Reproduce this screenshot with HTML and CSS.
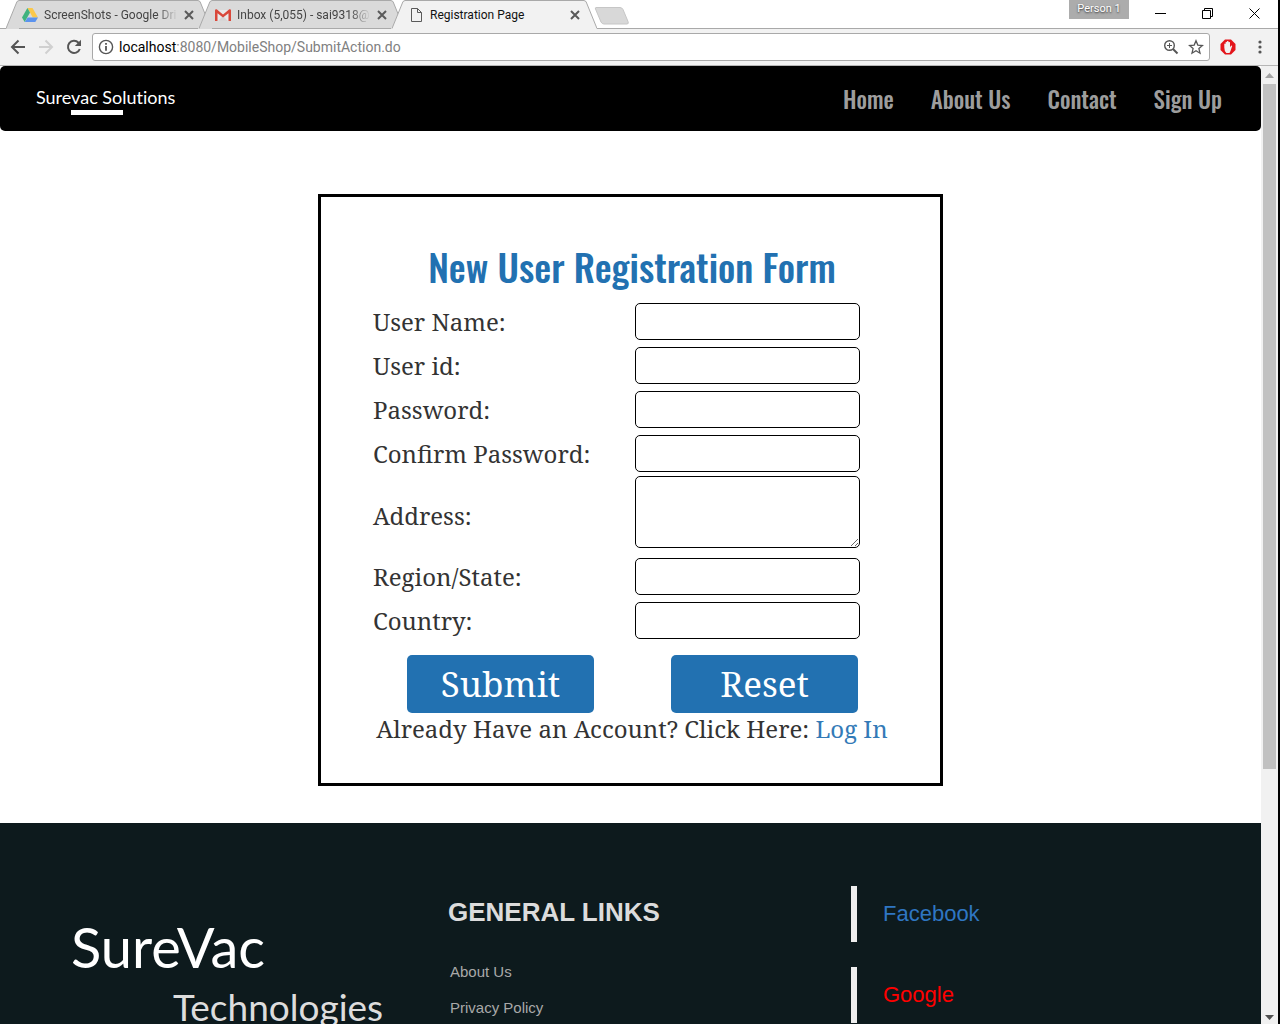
FILE: index.html
```html
<!DOCTYPE html>
<html lang="en">
<head>
<meta charset="utf-8">
<title>Registration Page</title>
<link rel="stylesheet" href="styles.css">
</head>
<body>
<div class="window">
  <header class="tabstrip">
    <div class="tab">
      <svg class="slope" width="13" height="29" viewBox="0 0 13 29"><path class="fill" d="M0 29 0 28.500 11 1.500 13 .5V29z"/><path class="line" d="M0 28.500 11 1.500 13 .5"/></svg>
      <div class="tab-body">
        <svg width="16" height="16" viewBox="0 0 16 16"><path fill="#fbc84b" d="M5.500 1h5L16 10.500h-5.200z"/><path fill="#3fb37f" d="M5.400 1 8 5.600 2.700 15 0 10.500z"/><path fill="#5b93ee" d="M5.600 10.500H16L13.300 15H2.800z"/></svg>
        <span class="tab-title fade">ScreenShots - Google Dri</span>
        <button class="close" aria-label="Close ScreenShots"><svg width="10" height="10" viewBox="0 0 10 10"><path d="M1 1l8 8M9 1L1 9"/></svg></button>
      </div>
      <svg class="slope" width="13" height="29" viewBox="0 0 13 29"><path class="fill" d="M13 29V28.500L2 1.500 0 .5V29z"/><path class="line" d="M13 28.500 2 1.500 0 .5"/></svg>
    </div>
    <div class="tab">
      <svg class="slope" width="13" height="29" viewBox="0 0 13 29"><path class="fill" d="M0 29 0 28.500 11 1.500 13 .5V29z"/><path class="line" d="M0 28.500 11 1.500 13 .5"/></svg>
      <div class="tab-body">
        <svg width="16" height="16" viewBox="0 0 16 16"><path fill="#e9e9e9" d="M1 3h14v11H1z"/><path fill="#d6d6d6" d="M3 14 8 9l5 5z"/><path fill="#d9483b" d="M0 3.500C0 2.500 1.300 2 2 2.600l6 4.800 6-4.800c.7-.6 2-.1 2 .9V14h-2.500V6.200L8 10.600 2.500 6.200V14H0z"/></svg>
        <span class="tab-title fade">Inbox (5,055) - sai9318@</span>
        <button class="close" aria-label="Close Inbox"><svg width="10" height="10" viewBox="0 0 10 10"><path d="M1 1l8 8M9 1L1 9"/></svg></button>
      </div>
      <svg class="slope" width="13" height="29" viewBox="0 0 13 29"><path class="fill" d="M13 29V28.500L2 1.500 0 .5V29z"/><path class="line" d="M13 28.500 2 1.500 0 .5"/></svg>
    </div>
    <div class="tab active">
      <svg class="slope" width="13" height="29" viewBox="0 0 13 29"><path class="fill" d="M0 29 0 28.500 11 1.500 13 .5V29z"/><path class="line" d="M0 28.500 11 1.500 13 .5"/></svg>
      <div class="tab-body">
        <svg width="16" height="16" viewBox="0 0 16 16"><path fill="none" stroke="#5a5a5a" d="M3.500 1.500h6l4 4v9h-10zM9.500 1.500v4h4"/></svg>
        <span class="tab-title">Registration Page</span>
        <button class="close" aria-label="Close Registration Page"><svg width="10" height="10" viewBox="0 0 10 10"><path d="M1 1l8 8M9 1L1 9"/></svg></button>
      </div>
      <svg class="slope" width="13" height="29" viewBox="0 0 13 29"><path class="fill" d="M13 29V28.500L2 1.500 0 .5V29z"/><path class="line" d="M13 28.500 2 1.500 0 .5"/></svg>
    </div>
    <button class="newtab" aria-label="New tab"><svg width="36" height="20" viewBox="0 0 36 20"><path fill="#d8d8d8" stroke="#c6c6c6" d="M2 1.500h24q2 0 3 2l5 12q1 2.500-1 2.500H10q-2 0-3-2L1.500 3Q1 1.500 2 1.500z"/></svg></button>
    <div class="window-controls">
      <span class="person">Person 1</span>
      <button aria-label="Minimize"><svg width="11" height="11" viewBox="0 0 11 11"><path d="M0 5.500h11"/></svg></button>
      <button aria-label="Restore"><svg width="11" height="11" viewBox="0 0 11 11"><path d="M.5 2.500h8v8h-8zM2.500 2.500v-2h8v8h-2"/></svg></button>
      <button aria-label="Close"><svg width="11" height="11" viewBox="0 0 11 11"><path d="M.5.5l10 10M10.500.5l-10 10"/></svg></button>
    </div>
  </header>

  <div class="toolbar">
    <button aria-label="Back"><svg width="16" height="16" viewBox="0 0 16 16" fill="none" stroke="#555" stroke-width="2"><path d="M15 8H2.500M8.500 1.500 2 8l6.500 6.500"/></svg></button>
    <button aria-label="Forward"><svg width="16" height="16" viewBox="0 0 16 16" fill="none" stroke="#d0d0d0" stroke-width="2"><path d="M1 8h12.500M7.500 1.500 14 8l-6.500 6.500"/></svg></button>
    <button aria-label="Reload"><svg width="16" height="16" viewBox="0 0 16 16" fill="none" stroke="#555" stroke-width="2"><path d="M13.800 10A6.100 6.100 0 1 1 12.500 3.700L14 5.200"/><path fill="#555" stroke="none" d="M15 .8v6.200H8.800z"/></svg></button>
    <div class="omnibox">
      <svg width="16" height="16" viewBox="0 0 16 16" fill="none" stroke="#555" stroke-width="1.400"><circle cx="8" cy="8" r="6.600"/><path stroke-width="1.800" d="M8 7v4.800M8 4v1.800"/></svg>
      <span class="url"><b>localhost</b>:8080/MobileShop/SubmitAction.do</span>
      <svg width="16" height="16" viewBox="0 0 16 16" fill="none" stroke="#555"><circle cx="6.500" cy="6.500" r="4.800" stroke-width="1.400"/><path stroke-width="2" d="M10 10l4.500 4.500"/><path d="M4 6.500h5M6.500 4v5"/></svg>
      <svg width="16" height="16" viewBox="0 0 16 16" fill="none" stroke="#555" stroke-width="1.300"><path d="M8 1.800l1.800 4.300 4.700.4-3.600 3.100 1.100 4.600L8 11.700l-4 2.500 1.100-4.600L1.500 6.500l4.700-.4z"/></svg>
    </div>
    <button aria-label="Ad blocker"><svg width="16" height="16" viewBox="0 0 16 16"><path fill="#e3151b" d="M5 .5h6L15.500 5v6L11 15.500H5L.5 11V5z"/><path fill="#f1f1f1" d="M4.300 8.500V5q.6-.8 1.300 0V3.200q.7-.9 1.400 0V2.300q.8-.8 1.500 0v1q.8-.8 1.500 0v5l1-1.600q1-.6 1.200.3L10.500 12 9.500 14H6.300Q4.300 12 4.300 8.500z"/></svg></button>
    <button aria-label="Menu"><svg width="16" height="16" viewBox="0 0 16 16" fill="#555"><circle cx="8" cy="3" r="1.600"/><circle cx="8" cy="8" r="1.600"/><circle cx="8" cy="13" r="1.600"/></svg></button>
  </div>

  <div class="viewport">
    <div class="page">
      <nav class="navbar">
        <a class="brand" href="#">Surevac Solutions</a>
        <ul class="menu">
          <li><a href="#">Home</a></li>
          <li><a href="#">About Us</a></li>
          <li><a href="#">Contact</a></li>
          <li><a href="#">Sign Up</a></li>
        </ul>
      </nav>

      <main>
        <form class="card">
          <h1>New User Registration Form</h1>
          <div class="row"><label for="name">User Name:</label><input id="name" type="text"></div>
          <div class="row"><label for="uid">User id:</label><input id="uid" type="text"></div>
          <div class="row"><label for="pw">Password:</label><input id="pw" type="password"></div>
          <div class="row"><label for="pw2">Confirm Password:</label><input id="pw2" type="password"></div>
          <div class="row tall"><label for="addr">Address:</label><textarea id="addr"></textarea></div>
          <div class="row"><label for="region">Region/State:</label><input id="region" type="text"></div>
          <div class="row"><label for="country">Country:</label><input id="country" type="text"></div>
          <div class="actions"><button type="submit">Submit</button><button type="reset">Reset</button></div>
          <p class="login">Already Have an Account? Click Here: <a href="#">Log In</a></p>
        </form>
      </main>

      <footer class="footer">
        <div class="company"><span class="name">SureVac</span><span class="kind">Technologies</span></div>
        <div class="links">
          <h2>GENERAL LINKS</h2>
          <ul>
            <li><a href="#">About Us</a></li>
            <li><a href="#">Privacy Policy</a></li>
          </ul>
        </div>
        <div class="social">
          <a class="facebook" href="#">Facebook</a>
          <a class="google" href="#">Google</a>
        </div>
      </footer>
    </div>
    <div class="scrollbar">
      <svg width="9" height="5" viewBox="0 0 9 5"><path fill="#a3a3a3" d="M4.500 0 9 5H0z"/></svg>
      <div class="track"><div class="thumb"></div></div>
      <svg width="9" height="5" viewBox="0 0 9 5"><path fill="#505050" d="M4.500 5 9 0H0z"/></svg>
    </div>
  </div>
</div>
</body>
</html>
```
FILE: styles.css
```css
* { box-sizing: border-box; }
body { margin: 0; background: #fff; color: #333; font-family: "Liberation Sans", Arial, sans-serif; }
a { text-decoration: none; }
ul { list-style: none; margin: 0; padding: 0; }
button { border: 0; padding: 0; background: none; font: inherit; }
svg { display: block; flex: none; }

.window { height: 100vh; display: flex; flex-direction: column; border-right: 2px solid #000; overflow: hidden; }

/* browser tabs */
.tabstrip { display: flex; height: 29px; flex: none; padding-left: 6px; border-bottom: 1px solid #a9a9a9; font-family: Roboto, sans-serif; font-size: 12px; }
.tab { display: flex; width: 205px; height: 29px; margin-right: -12px; }
.tab .fill { fill: #dadada; }
.tab .line { fill: none; stroke: #a9a9a9; }
.tab-body { flex: 1; min-width: 0; height: 28px; display: flex; align-items: center; gap: 6px; padding: 0 4px 0 3px; background: #dadada; border-top: 1px solid #a9a9a9; color: #444; }
.tab-title { flex: 1; min-width: 0; overflow: hidden; white-space: nowrap; line-height: 16px; }
.fade { -webkit-mask-image: linear-gradient(to right, #000 84%, transparent); mask-image: linear-gradient(to right, #000 84%, transparent); }
.close path { fill: none; stroke: #5a5a5a; stroke-width: 2; }
.active { position: relative; margin-right: -3px; }
.active .fill { fill: #f2f2f2; }
.active .tab-body { background: #f2f2f2; color: #111; height: 29px; }
.newtab { align-self: flex-start; margin-top: 6px; }
.window-controls { margin-left: auto; display: flex; align-items: flex-start; gap: 36px; padding-right: 18px; }
.window-controls button { height: 26px; display: flex; align-items: center; }
.window-controls path { fill: none; stroke: #000; }
.person { width: 60px; height: 19px; margin-right: -10px; background: #acacac; color: #fff; font-size: 11px; line-height: 18px; text-align: center; text-shadow: 0 1px 2px #333; }

/* address bar */
.toolbar { display: flex; align-items: center; gap: 12px; height: 37px; flex: none; padding: 0 10px; background: #f2f2f2; border-bottom: 1px solid #b6b6b6; }
.toolbar > button { flex: none; }
.toolbar > button:last-child { margin-left: 4px; }
.omnibox { flex: 1; display: flex; align-items: center; gap: 9px; height: 28px; margin: 0 -2px; padding: 0 5px; background: #fff; border: 1px solid #a9a9a9; border-radius: 3px; }
.url { flex: 1; margin-left: -4px; font: 14px/20px Roboto, sans-serif; color: #808080; }
.url b { font-weight: 400; color: #000; }

/* page and scrollbar */
.viewport { flex: 1; min-height: 0; display: flex; }
.page { flex: 1; min-width: 0; overflow: hidden; }
.scrollbar { flex: none; width: 17px; display: flex; flex-direction: column; align-items: center; gap: 6px; padding: 7px 0 4px; background: #f1f1f1; }
.track { flex: 1; width: 13px; }
.thumb { height: 74%; background: #c1c1c1; }

.navbar { display: flex; align-items: center; justify-content: space-between; min-height: 65px; padding: 0 39px 0 36px; background: #000; border-radius: 5px; }
.brand { padding-top: 4px; color: #fff; font: 18px/22px Lato, sans-serif; font-variant-ligatures: none; }
.brand::after { content: ""; display: block; width: 52px; height: 5px; margin: 2px 0 0 35px; background: #fff; }
.menu { display: flex; gap: 37px; }
.menu a { color: #9d9d9d; font: 500 23px/32px Oswald, "Roboto Condensed", sans-serif; }

/* registration form */
.card { width: 625px; max-width: 100%; margin: 63px auto 37px; padding: 38px 49px 38px 52px; border: 3px solid #000; background: #fff; font: 24px/32px "Noto Serif", "DejaVu Serif", serif; }
.card h1 { margin: 0; padding-bottom: 2px; color: #2271b1; font: 500 38px/63px Oswald, "Roboto Condensed", sans-serif; text-align: center; }
.row { display: grid; grid-template-columns: 262px 225px; height: 44px; align-items: center; }
.row input, .row textarea { width: 100%; height: 37px; border: 1px solid #000; border-radius: 5px; background: #fff; font: inherit; font-size: 18px; padding: 2px 8px; }
.row input { margin-bottom: 1px; }
.row.tall { height: 79px; }
.row textarea { height: 72px; align-self: start; resize: both; }
.actions { display: flex; gap: 77px; margin: 12px 0 0 34px; }
.actions button { width: 187px; height: 58px; border-radius: 5px; background: #2271b1; color: #fff; font-size: 35px; line-height: 58px; }
.login { margin: 0 -10px; text-align: center; white-space: nowrap; }
.login a { color: #337ab7; }

/* footer */
.footer { display: grid; grid-template-columns: 448px 403px 1fr; padding-top: 63px; min-height: 480px; background: #0d1a1d; }
.company { padding: 26px 0 0 71px; font-family: Lato, sans-serif; color: #fff; }
.company span { display: block; }
.name { font-size: 56px; line-height: 70px; }
.kind { padding-left: 102px; font-size: 37px; line-height: 50px; color: #ddd; }
.links h2 { margin: 10px 0 26px; color: #dcdcdc; font-size: 26px; line-height: 32px; }
.links li { padding-left: 2px; }
.links a { color: #a9a9a9; font-size: 15px; line-height: 36px; }
.social { display: flex; flex-direction: column; gap: 25px; }
.social a { border-left: 6px solid #eee; padding-left: 26px; font-size: 22px; line-height: 56px; }
.facebook { color: #2f76c2; }
.google { color: #f00; }
```
